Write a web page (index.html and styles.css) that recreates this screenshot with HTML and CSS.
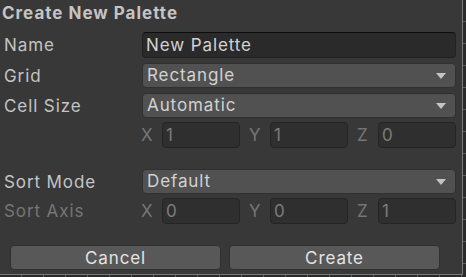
FILE: index.html
```html
<!DOCTYPE html>
<html lang="en">
<head>
    <meta charset="UTF-8">
    <title>Create New Palette</title>
    <link rel="stylesheet" href="styles.css">
</head>
<body>
    <div class="cnp_window">
        <div class="cnp_title">Create New Palette</div>

        <div class="cnp_row cnp_first">
            <div class="cnp_label">Name</div>
            <div class="cnp_text">New Palette</div>
        </div>
        <div class="cnp_row">
            <div class="cnp_label">Grid</div>
            <div class="cnp_popup">Rectangle <span class="cnp_arrow"></span></div>
        </div>
        <div class="cnp_row">
            <div class="cnp_label">Cell Size</div>
            <div class="cnp_popup">Automatic <span class="cnp_arrow"></span></div>
        </div>
        <div class="cnp_row cnp_vecRow">
            <div class="cnp_label"></div>
            <div class="cnp_vector">
                <span class="cnp_axis">X</span><div class="cnp_num">1</div>
                <span class="cnp_axis">Y</span><div class="cnp_num">1</div>
                <span class="cnp_axis">Z</span><div class="cnp_num">0</div>
            </div>
        </div>

        <div class="cnp_row cnp_spaced">
            <div class="cnp_label">Sort Mode</div>
            <div class="cnp_popup">Default <span class="cnp_arrow"></span></div>
        </div>
        <div class="cnp_row cnp_vecRow">
            <div class="cnp_label cnp_disabled">Sort Axis</div>
            <div class="cnp_vector">
                <span class="cnp_axis">X</span><div class="cnp_num">0</div>
                <span class="cnp_axis">Y</span><div class="cnp_num">0</div>
                <span class="cnp_axis">Z</span><div class="cnp_num">1</div>
            </div>
        </div>

        <div class="cnp_buttons">
            <button class="cnp_btn">Cancel</button>
            <button class="cnp_btn">Create</button>
        </div>
    </div>
</body>
</html>
```

FILE: styles.css
```css
body {
    margin: 0;
    width: 466px;
    height: 277px;
    overflow: hidden;
    background-color: #2a2a2a;
    background-image:
        repeating-linear-gradient(to bottom, transparent 0, transparent 21px, #5a5a5a 21px, #5a5a5a 22px),
        repeating-linear-gradient(to right, transparent 0, transparent 21px, #5a5a5a 21px, #5a5a5a 22px);
    font-family: Inter, "Noto Sans", sans-serif;
    letter-spacing: 0.9px;
}
.cnp_window {
    width: 463px;
    height: 275px;
    box-sizing: border-box;
    background: #383838;
    border-right: 1px solid #7a7a7a;
    border-bottom: 1px solid #7a7a7a;
    display: flex;
    flex-direction: column;
}
.cnp_title {
    height: 27px;
    line-height: 27px;
    padding-left: 2px;
    font-size: 17px;
    font-weight: 700;
    letter-spacing: 1px;
    color: #c4c4c4;
}

/* rows */
.cnp_row {
    display: flex;
    align-items: center;
    height: 25px;
    margin-top: 5px;
    padding-right: 6px;
}
.cnp_first {
    height: 26px;
}
.cnp_vecRow {
    height: 26px;
    margin-top: 4px;
}
.cnp_spaced {
    margin-top: 21px;
}
.cnp_label {
    width: 138px;
    padding-left: 4px;
    font-size: 17px;
    color: #c4c4c4;
}
.cnp_disabled {
    color: #767676;
}
.cnp_text {
    flex: 1;
    height: 26px;
    box-sizing: border-box;
    background: #2a2a2a;
    border: 1px solid #212121;
    border-top-color: #0d0d0d;
    border-radius: 4px;
    padding-left: 3px;
    line-height: 24px;
    font-size: 17px;
    color: #d2d2d2;
}
.cnp_popup {
    flex: 1;
    height: 25px;
    box-sizing: border-box;
    background: #515151;
    border: 1px solid #303030;
    border-radius: 4px;
    padding-left: 4px;
    line-height: 23px;
    font-size: 17px;
    color: #d2d2d2;
    position: relative;
}
.cnp_arrow {
    position: absolute;
    right: 9px;
    top: 9px;
    width: 0;
    height: 0;
    border-left: 5px solid transparent;
    border-right: 5px solid transparent;
    border-top: 6px solid #c4c4c4;
}

/* vector fields */
.cnp_vector {
    flex: 1;
    display: flex;
    align-items: center;
}
.cnp_axis {
    width: 22px;
    padding-left: 1px;
    box-sizing: border-box;
    font-size: 17px;
    color: #767676;
}
.cnp_num {
    width: 78px;
    height: 26px;
    box-sizing: border-box;
    margin-right: 8px;
    background: #2f2f2f;
    border: 1px solid #242424;
    border-radius: 4px;
    padding-left: 3px;
    line-height: 24px;
    font-size: 17px;
    color: #7c7c7c;
}
.cnp_num:last-child {
    margin-right: 0;
}

/* buttons */
.cnp_buttons {
    display: flex;
    gap: 8px;
    margin-top: 21px;
    padding: 0 22px 0 10px;
}
.cnp_btn {
    flex: 1;
    height: 25px;
    background: #585858;
    border: 1px solid #303030;
    border-radius: 4px;
    font-family: Inter, "Noto Sans", sans-serif;
    font-size: 17px;
    letter-spacing: 0.9px;
    color: #e4e4e4;
    padding: 0;
}
```
